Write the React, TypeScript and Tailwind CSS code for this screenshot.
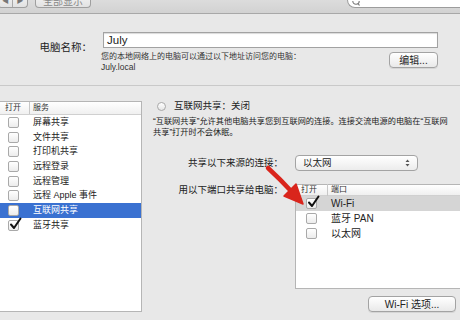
import { ReactNode } from "react";

const FONT = { fontFamily: '"Lucida Grande", "Liberation Sans", "Noto Sans CJK SC", sans-serif' };

function Check({ on = false }: { on?: boolean }) {
  return (
    <span className="relative inline-block w-[11px] h-[11px] rounded-[2px] border border-[#a9a9a9] bg-gradient-to-b from-white to-[#ececec] shrink-0">
      {on && (
        <svg className="absolute -top-[4px] left-[0px]" width="13" height="13" viewBox="0 0 13 13">
          <path d="M2 7.5 L5 11 L11.5 1.5" fill="none" stroke="#111" strokeWidth="2" strokeLinecap="round" strokeLinejoin="round" />
        </svg>
      )}
    </span>
  );
}

function Btn({ children, className = "" }: { children: ReactNode; className?: string }) {
  return (
    <div
      className={`flex items-center justify-center h-[16px] rounded-[4px] border border-[#a3a3a3] bg-gradient-to-b from-white to-[#e9e9e9] text-[10px] text-[#222] shadow-[0_1px_0_rgba(0,0,0,0.08)] ${className}`}
    >
      {children}
    </div>
  );
}

const SERVICES = [
  { name: "屏幕共享", on: false },
  { name: "文件共享", on: false },
  { name: "打印机共享", on: false },
  { name: "远程登录", on: false },
  { name: "远程管理", on: false },
  { name: "远程 Apple 事件", on: false },
  { name: "互联网共享", on: false, selected: true },
  { name: "蓝牙共享", on: true },
];

const PORTS = [
  { name: "Wi-Fi", on: true, hl: true },
  { name: "蓝牙 PAN", on: false },
  { name: "以太网", on: false },
];

export default function App() {
  return (
    <div className="relative w-[460px] h-[320px] overflow-hidden bg-[#e8e8e8] text-[#222]" style={FONT}>
      {/* Toolbar */}
      <div className="h-[14px] bg-gradient-to-b from-[#dcdcdc] to-[#d2d2d2] border-b border-[#a8a8a8] flex items-end pb-[5px]">
        <div className="flex -ml-[2px] h-[12px] rounded-b-[4px] border border-t-0 border-[#9f9f9f] bg-gradient-to-b from-[#f2f2f2] to-[#e2e2e2]">
          <div className="w-[14px] flex items-center justify-center text-[7px] text-[#777] border-r border-[#a9a9a9]">◀</div>
          <div className="w-[14px] flex items-center justify-center text-[7px] text-[#777]">▶</div>
        </div>
        <div className="ml-[7px] w-[56px] h-[12px] rounded-b-[4px] border border-t-0 border-[#9f9f9f] bg-gradient-to-b from-[#f2f2f2] to-[#e2e2e2] flex items-end justify-center text-[10px] leading-[10px] text-[#888]">
          全部显示
        </div>
        <div className="ml-auto w-[113px] h-[8px] rounded-bl-[8px] border border-t-0 border-r-0 border-[#9c9c9c] bg-white flex items-end pl-[4px]">
          <svg width="8" height="6" viewBox="0 0 8 6">
            <circle cx="4" cy="0" r="3.2" fill="none" stroke="#777" strokeWidth="1.1" />
            <path d="M6 2.5 L7.5 4.5" stroke="#777" strokeWidth="1.2" />
          </svg>
        </div>
      </div>

      {/* Computer name */}
      <div className="h-[72px] border-b border-[#c9c9c9] flex">
        <div className="w-[96px] pt-[27px] pr-[4px] text-right text-[10.5px] leading-[13px]">电脑名称：</div>
        <div className="flex-1 pt-[18px] pr-[22px]">
          <div className="ml-[7px] h-[16px] border border-[#a2a2a2] bg-white shadow-[inset_0_1px_1px_rgba(0,0,0,0.15)] pl-[3px] text-[11.5px] leading-[14px]">
            July
          </div>
          <div className="flex">
            <div className="ml-[5px] pt-[3px] text-[8px] leading-[11px] text-[#333]">
              <div>您的本地网络上的电脑可以通过以下地址访问您的电脑：</div>
              <div className="text-[8.5px]">July.local</div>
            </div>
            <Btn className="ml-auto mt-[4px] w-[49px]">编辑...</Btn>
          </div>
        </div>
      </div>

      {/* Bottom area */}
      <div className="flex">
        {/* Services list */}
        <div className="mt-[15px] w-[142px] h-[211px] bg-white border border-l-0 border-[#b5b5b5]">
          <div className="h-[13px] flex items-center border-b border-[#d0d0d0] bg-gradient-to-b from-white to-[#f0f0f0] text-[8px] text-[#333]">
            <div className="w-[30px] pl-[5px] border-r border-[#c7c7c7]">打开</div>
            <div className="pl-[3px]">服务</div>
          </div>
          {SERVICES.map((s) => (
            <div
              key={s.name}
              className={`h-[14.7px] flex items-center text-[9px] ${s.selected ? "bg-[#3a71d1] text-white" : "text-[#222]"}`}
            >
              <div className="w-[33px] pl-[8px] flex">
                <Check on={s.on} />
              </div>
              <div className="leading-[13px]">{s.name}</div>
            </div>
          ))}
        </div>

        {/* Right panel */}
        <div className="flex-1 pl-[11px] pt-[13px]">
          <div className="flex items-center h-[14px] pl-[4px]">
            <span className="w-[9px] h-[9px] rounded-full border border-[#a9a9a9] bg-gradient-to-b from-white to-[#e6e6e6]" />
            <span className="ml-[8px] text-[9.5px]">互联网共享：关闭</span>
          </div>
          <div className="mt-[3px] text-[8.2px] leading-[11px] text-[#222] whitespace-nowrap">
            <div>“互联网共享”允许其他电脑共享您到互联网的连接。连接交流电源的电脑在“互联网</div>
            <div>共享”打开时不会休眠。</div>
          </div>

          <div className="mt-[17px] flex items-center h-[16px]">
            <div className="w-[130px] text-right text-[9.5px]">共享以下来源的连接：</div>
            <div className="ml-[12px] w-[123px] h-[16px] rounded-[4px] border border-[#a3a3a3] bg-gradient-to-b from-white to-[#ececec] flex items-center pl-[7px] text-[9.5px]">
              以太网
              <span className="ml-auto mr-[7px] flex flex-col">
                <svg width="5" height="8" viewBox="0 0 5 8">
                  <path d="M0.5 3 L2.5 0.5 L4.5 3 Z M0.5 5 L2.5 7.5 L4.5 5 Z" fill="#555" />
                </svg>
              </span>
            </div>
          </div>

          <div className="mt-[13px] flex">
            <div className="w-[130px] text-right text-[9.5px] leading-[12px]">用以下端口共享给电脑：</div>
            <div className="ml-[12px] w-[165px] h-[105px] bg-white border border-r-0 border-[#b5b5b5]">
              <div className="h-[11px] flex items-center border-b border-[#d0d0d0] bg-gradient-to-b from-white to-[#f0f0f0] text-[8px] text-[#333]">
                <div className="w-[32px] pl-[5px] border-r border-[#c7c7c7]">打开</div>
                <div className="pl-[3px]">端口</div>
              </div>
              {PORTS.map((p) => (
                <div key={p.name} className={`h-[15px] flex items-center text-[10px] ${p.hl ? "bg-[#d5d5d5]" : ""}`}>
                  <div className="w-[35px] pl-[10px] flex">
                    <Check on={p.on} />
                  </div>
                  <div className="leading-[13px]">{p.name}</div>
                </div>
              ))}
            </div>
          </div>

          <div className="mt-[7px] flex justify-end pr-[4px]">
            <Btn className="w-[88px]">Wi-Fi 选项...</Btn>
          </div>
        </div>
      </div>

      {/* Red arrow overlay */}
      <svg className="absolute left-0 top-0 pointer-events-none" width="460" height="320" viewBox="0 0 460 320">
        <path d="M268 168 Q281 180 291 191" fill="none" stroke="#d9251c" strokeWidth="4.5" strokeLinecap="round" />
        <path d="M303 204 L284 196 L296 184 Z" fill="#d9251c" stroke="#d9251c" strokeWidth="1.5" strokeLinejoin="round" />
      </svg>
    </div>
  );
}
